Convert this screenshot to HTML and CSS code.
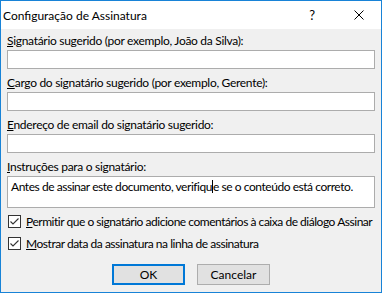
FILE: index.html
```html
<!DOCTYPE html>
<html lang="pt">
<head>
    <meta charset="UTF-8">
    <title>Configuração de Assinatura</title>
    <link rel="stylesheet" href="styles.css">
</head>
<body>
    <div class="window">
        <div class="titlebar">
            <span class="title">Configuração de Assinatura</span>
            <span class="help">?</span>
            <span class="close">
                <svg width="10" height="10" viewBox="0 0 10 10"><path d="M0.5 0.5 L9.5 9.5 M9.5 0.5 L0.5 9.5" stroke="#000" stroke-width="1" fill="none"/></svg>
            </span>
        </div>
        <div class="content">
            <div class="form-group">
                <label><u>S</u>ignatário sugerido (por exemplo, João da Silva):</label>
                <div class="input"></div>
            </div>
            <div class="form-group">
                <label><u>C</u>argo do signatário sugerido (por exemplo, Gerente):</label>
                <div class="input"></div>
            </div>
            <div class="form-group">
                <label><u>E</u>ndereço de email do signatário sugerido:</label>
                <div class="input"></div>
            </div>
            <div class="form-group">
                <label><u>I</u>nstruções para o signatário:</label>
                <div class="textarea">Antes de assinar este documento, verifiqu<span class="caret"></span>e se o conteúdo está correto.</div>
            </div>
            <div class="check-row">
                <span class="checkbox"><svg width="11" height="11" viewBox="0 0 11 11"><path d="M1.5 5.5 L4 8 L9.5 2.5" stroke="#333" stroke-width="1.1" fill="none"/></svg></span>
                <span><u>P</u>ermitir que o signatário adicione comentários à caixa de diálogo Assinar</span>
            </div>
            <div class="check-row">
                <span class="checkbox"><svg width="11" height="11" viewBox="0 0 11 11"><path d="M1.5 5.5 L4 8 L9.5 2.5" stroke="#333" stroke-width="1.1" fill="none"/></svg></span>
                <span><u>M</u>ostrar data da assinatura na linha de assinatura</span>
            </div>
            <div class="buttons">
                <button class="btn default">OK</button>
                <button class="btn">Cancelar</button>
            </div>
        </div>
    </div>
</body>
</html>
```

FILE: styles.css
```css
body {
    margin: 0;
    padding: 0;
    font-family: 'Lato', 'Noto Sans', sans-serif;
    font-size: 12px;
    letter-spacing: -0.3px;
    color: #000;
}

.window {
    width: 382px;
    height: 293px;
    box-sizing: border-box;
    border: 1px solid #1883d7;
    background: #f0f0f0;
    display: flex;
    flex-direction: column;
}

.titlebar {
    height: 28px;
    background: #fff;
    display: flex;
    align-items: center;
    padding-left: 2px;
}

.title {
    flex: 1;
    font-size: 12px;
    letter-spacing: 0;
}

.help {
    width: 10px;
    text-align: center;
    margin-right: 37px;
    font-size: 13px;
}

.close {
    width: 10px;
    height: 10px;
    display: flex;
    margin-right: 17px;
}

.content {
    padding: 4px 6px 0 6px;
}

.form-group {
    margin-bottom: 6px;
}

.form-group label {
    display: block;
    line-height: 16px;
    margin-bottom: 1px;
}

.input {
    height: 19px;
    box-sizing: border-box;
    background: #fff;
    border: 1px solid #acacac;
}

.textarea {
    height: 32px;
    box-sizing: border-box;
    background: #fff;
    border: 1px solid #acacac;
    padding: 2px 3px;
    line-height: 16px;
    white-space: nowrap;
    letter-spacing: -0.45px;
}

.caret {
    display: inline-block;
    width: 1px;
    height: 13px;
    background: #000;
    vertical-align: -2px;
}

.check-row {
    height: 22px;
    display: flex;
    align-items: center;
    gap: 5px;
    padding-left: 1px;
    white-space: nowrap;
    letter-spacing: -0.47px;
}

.form-group + .check-row {
    margin-top: -4px;
}

.checkbox {
    width: 13px;
    height: 13px;
    flex: none;
    box-sizing: border-box;
    border: 1px solid #333;
    background: #fff;
    display: flex;
    align-items: center;
    justify-content: center;
}

.buttons {
    display: flex;
    justify-content: center;
    gap: 12px;
    margin-top: 10px;
}

.btn {
    width: 73px;
    height: 21px;
    box-sizing: border-box;
    background: #e1e1e1;
    border: 1px solid #adadad;
    font-family: inherit;
    font-size: 12px;
    letter-spacing: 0;
    padding: 0;
}

.btn.default {
    border: 2px solid #0078d7;
}
```
